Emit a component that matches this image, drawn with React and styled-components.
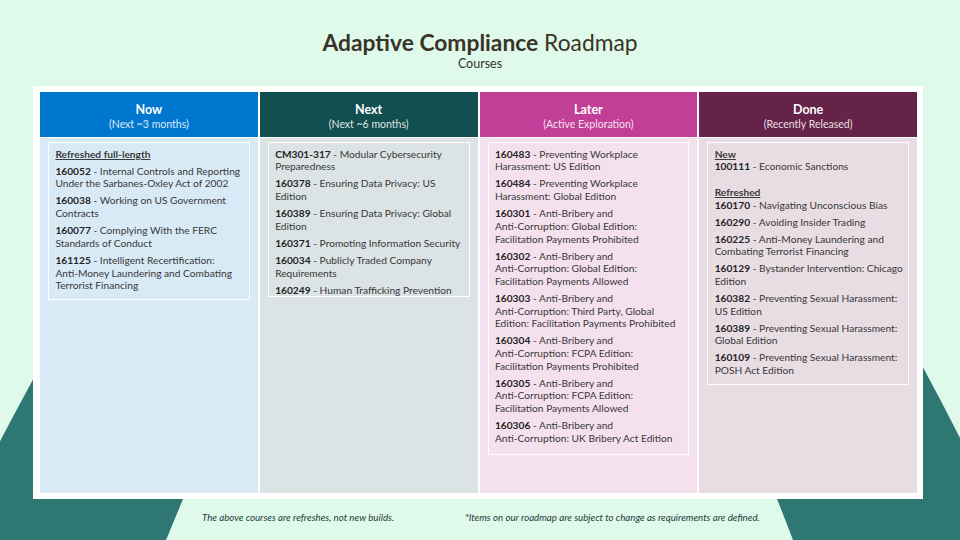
import styled, { createGlobalStyle } from "styled-components";

const GlobalStyle = createGlobalStyle`
  html, body {
    margin: 0;
    padding: 0;
  }
  body {
    font-family: Lato, "Open Sans", sans-serif;
    background: #dffaea;
  }
`;

const Page = styled.div`
  position: relative;
  width: 960px;
  height: 540px;
  overflow: hidden;
  background: #dffaea;
  display: flex;
  flex-direction: column;
`;

// декоративные пятна на фоне
const Blobs = styled.svg`
  position: absolute;
  left: 0;
  top: 0;
  width: 960px;
  height: 540px;
  z-index: 0;
`;

const Heading = styled.header`
  position: relative;
  z-index: 1;
  padding-top: 29px;
  text-align: center;
  color: #3a3328;
`;

const Title = styled.h1`
  margin: 0;
  font-size: 22.8px;
  line-height: 26px;
  font-weight: 400;

  strong {
    font-weight: 700;
  }
`;

const Subtitle = styled.div`
  font-size: 12.5px;
  line-height: 15px;
  color: #333;
  margin-top: 1px;
`;

const Board = styled.main`
  position: relative;
  z-index: 1;
  margin: 15px 0 0 33px;
  width: 890px;
  height: 413px;
  box-sizing: border-box;
  background: #ffffff;
  padding: 6px 6px 6px 7px;
  display: grid;
  grid-template-columns: repeat(4, 1fr);
  gap: 2px;
`;

const Column = styled.section`
  display: flex;
  flex-direction: column;
  gap: 1px;
  min-width: 0;
`;

const ColumnHead = styled.div`
  height: 45px;
  box-sizing: border-box;
  padding-top: 9.5px;
  text-align: center;
  background: ${(p) => p.$color};
  color: #ffffff;
`;

const HeadTitle = styled.div`
  font-size: 12.5px;
  line-height: 15px;
  font-weight: 700;
`;

const HeadNote = styled.div`
  font-size: 10.5px;
  line-height: 14px;
  color: rgba(255, 255, 255, 0.88);
`;

const ColumnBody = styled.div`
  flex: 1;
  background: ${(p) => p.$color};
  padding: 4px 8px 0 8px;
`;

const Card = styled.div`
  border: 1px solid #ffffff;
  padding: 4.7px 6px ${(p) => p.$bottom}px 6.4px;
  font-size: 10.2px;
  line-height: 12.7px;
  color: #383838;
`;

const Entry = styled.div`
  margin-bottom: 4.3px;

  &:last-child {
    margin-bottom: 0;
  }
`;

const Line = styled.div`
  white-space: nowrap;
`;

const Code = styled.b`
  font-weight: 700;
  color: #232323;
`;

const Label = styled.span`
  font-weight: 700;
  text-decoration: underline;
  color: #3a3a3a;
`;

const Footer = styled.footer`
  position: relative;
  z-index: 1;
  display: grid;
  grid-template-columns: 263px auto;
  padding: 12px 0 0 202px;
  font-size: 9.7px;
  line-height: 12px;
  font-style: italic;
  color: #1c3a3a;
`;

const columns = [
  {
    key: "now",
    title: "Now",
    note: "(Next ~3 months)",
    head: "#0077cf",
    body: "#d9eaf7",
    bottom: 7,
    entries: [
      [{ heading: "Refreshed full-length" }],
      [
        { id: "160052", text: "Internal Controls and Reporting" },
        { text: "Under the Sarbanes-Oxley Act of 2002" },
      ],
      [{ id: "160038", text: "Working on US Government" }, { text: "Contracts" }],
      [{ id: "160077", text: "Complying With the FERC" }, { text: "Standards of Conduct" }],
      [
        { id: "161125", text: "Intelligent Recertification:" },
        { text: "Anti-Money Laundering and Combating" },
        { text: "Terrorist Financing" },
      ],
    ],
  },
  {
    key: "next",
    title: "Next",
    note: "(Next ~6 months)",
    head: "#124f50",
    body: "#dbe3e4",
    bottom: 0,
    entries: [
      [{ id: "CM301-317", text: "Modular Cybersecurity" }, { text: "Preparedness" }],
      [{ id: "160378", text: "Ensuring Data Privacy: US" }, { text: "Edition" }],
      [{ id: "160389", text: "Ensuring Data Privacy: Global" }, { text: "Edition" }],
      [{ id: "160371", text: "Promoting Information Security" }],
      [{ id: "160034", text: "Publicly Traded Company" }, { text: "Requirements" }],
      [{ id: "160249", text: "Human Trafficking Prevention" }],
    ],
  },
  {
    key: "later",
    title: "Later",
    note: "(Active Exploration)",
    head: "#c23f97",
    body: "#f5e1ee",
    bottom: 9,
    entries: [
      [{ id: "160483", text: "Preventing Workplace" }, { text: "Harassment: US Edition" }],
      [{ id: "160484", text: "Preventing Workplace" }, { text: "Harassment: Global Edition" }],
      [
        { id: "160301", text: "Anti-Bribery and" },
        { text: "Anti-Corruption: Global Edition:" },
        { text: "Facilitation Payments Prohibited" },
      ],
      [
        { id: "160302", text: "Anti-Bribery and" },
        { text: "Anti-Corruption: Global Edition:" },
        { text: "Facilitation Payments Allowed" },
      ],
      [
        { id: "160303", text: "Anti-Bribery and" },
        { text: "Anti-Corruption: Third Party, Global" },
        { text: "Edition: Facilitation Payments Prohibited" },
      ],
      [
        { id: "160304", text: "Anti-Bribery and" },
        { text: "Anti-Corruption: FCPA Edition:" },
        { text: "Facilitation Payments Prohibited" },
      ],
      [
        { id: "160305", text: "Anti-Bribery and" },
        { text: "Anti-Corruption: FCPA Edition:" },
        { text: "Facilitation Payments Allowed" },
      ],
      [
        { id: "160306", text: "Anti-Bribery and" },
        { text: "Anti-Corruption: UK Bribery Act Edition" },
      ],
    ],
  },
  {
    key: "done",
    title: "Done",
    note: "(Recently Released)",
    head: "#662349",
    body: "#e8dde3",
    bottom: 7,
    entries: [
      [
        { heading: "New" },
        { id: "100111", text: "Economic Sanctions" },
        { blank: true },
        { heading: "Refreshed" },
        { id: "160170", text: "Navigating Unconscious Bias" },
      ],
      [{ id: "160290", text: "Avoiding Insider Trading" }],
      [{ id: "160225", text: "Anti-Money Laundering and" }, { text: "Combating Terrorist Financing" }],
      [{ id: "160129", text: "Bystander Intervention: Chicago" }, { text: "Edition" }],
      [{ id: "160382", text: "Preventing Sexual Harassment:" }, { text: "US Edition" }],
      [{ id: "160389", text: "Preventing Sexual Harassment:" }, { text: "Global Edition" }],
      [{ id: "160109", text: "Preventing Sexual Harassment:" }, { text: "POSH Act Edition" }],
    ],
  },
];

// одна строка внутри карточки курса
function EntryLine({ line }) {
  if (line.blank) return <Line>{"\u00a0"}</Line>;
  if (line.heading) {
    return (
      <Line>
        <Label>{line.heading}</Label>
      </Line>
    );
  }
  return (
    <Line>
      {line.id && (
        <>
          <Code>{line.id}</Code> -{" "}
        </>
      )}
      {line.text}
    </Line>
  );
}

function App() {
  return (
    <>
      <GlobalStyle />
      <Page>
        <Blobs viewBox="0 0 960 540" aria-hidden="true">
          <path d="M 78 300 Q 40 365 -2 445 L -2 545 L 164 545 L 195 470 L 200 300 Z" fill="#2e7773" />
          <path d="M 885 300 Q 925 368 965 448 L 965 545 L 795 545 L 758 450 L 760 300 Z" fill="#2e7773" />
        </Blobs>

        <Heading>
          <Title>
            <strong>Adaptive Compliance</strong> Roadmap
          </Title>
          <Subtitle>Courses</Subtitle>
        </Heading>

        <Board>
          {columns.map((col) => (
            <Column key={col.key}>
              <ColumnHead $color={col.head}>
                <HeadTitle>{col.title}</HeadTitle>
                <HeadNote>{col.note}</HeadNote>
              </ColumnHead>
              <ColumnBody $color={col.body}>
                <Card $bottom={col.bottom}>
                  {col.entries.map((entry, i) => (
                    <Entry key={i}>
                      {entry.map((line, j) => (
                        <EntryLine key={j} line={line} />
                      ))}
                    </Entry>
                  ))}
                </Card>
              </ColumnBody>
            </Column>
          ))}
        </Board>

        <Footer>
          <span>The above courses are refreshes, not new builds.</span>
          <span>*Items on our roadmap are subject to change as requirements are defined.</span>
        </Footer>
      </Page>
    </>
  );
}

export default App;
